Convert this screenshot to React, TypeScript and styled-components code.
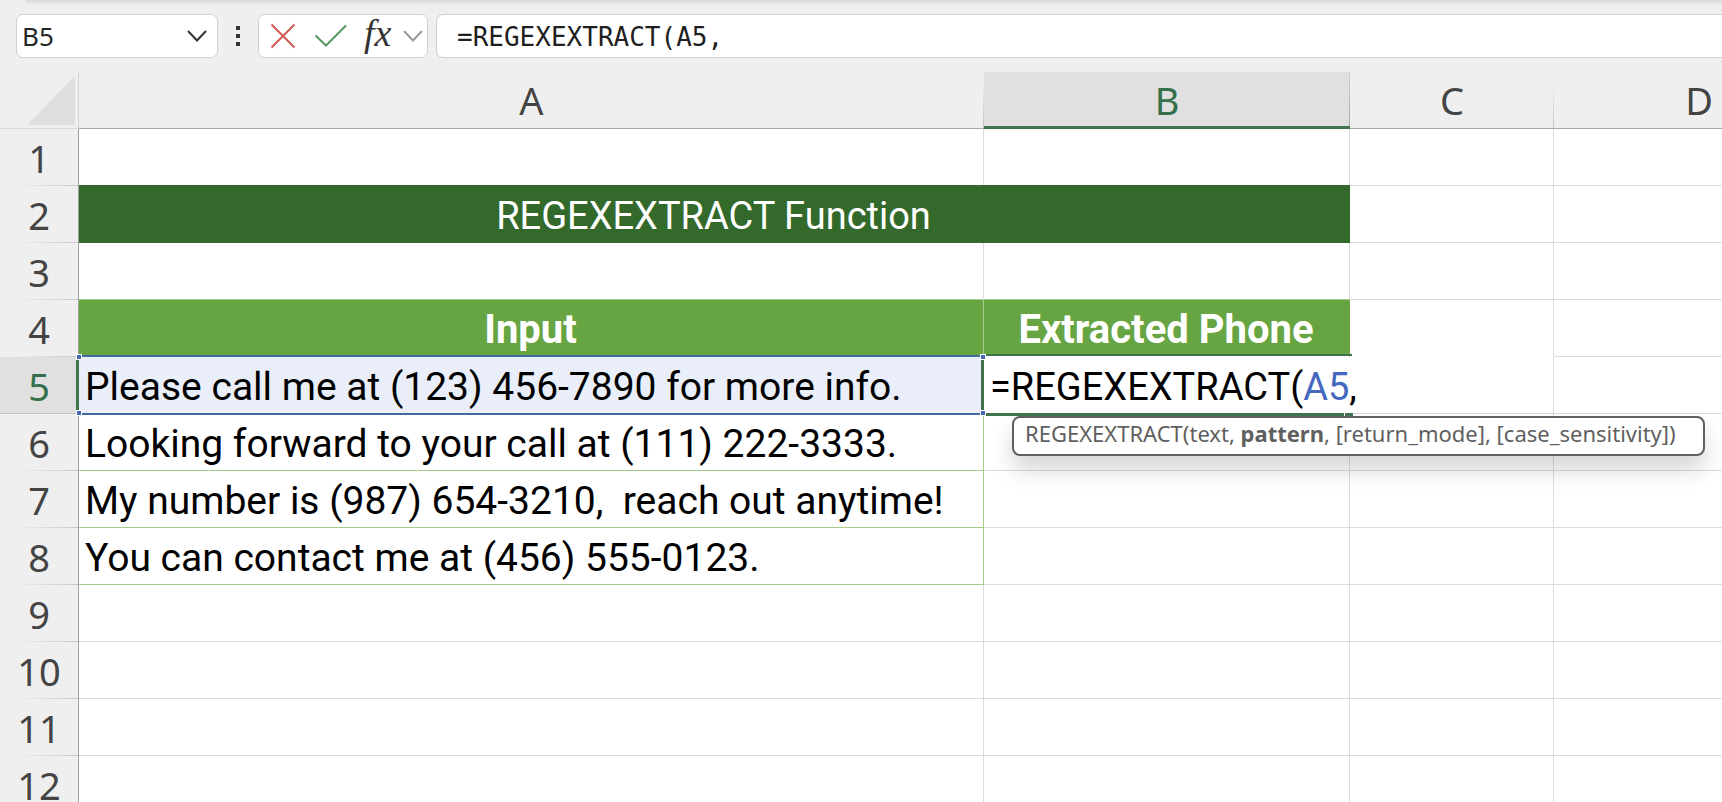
import styled, { createGlobalStyle, css } from "styled-components";

const GlobalStyle = createGlobalStyle`
  * {
    box-sizing: border-box;
  }
  body {
    margin: 0;
    background-color: #ffffff;
    overflow: hidden;
  }
`;

const headFont = `"Noto Sans", "Open Sans", sans-serif`;
const cellFont = `Roboto, "Liberation Sans", sans-serif`;
const monoFont = `"DejaVu Sans Mono", "Liberation Mono", monospace`;

const Page = styled.div`
  display: flex;
  flex-direction: column;
  height: 100vh;
  overflow: hidden;
  font-family: ${cellFont};
`;

const Toolbar = styled.header`
  flex: none;
  display: flex;
  align-items: flex-start;
  height: 72px;
  padding: 14px 0 0 16px;
  background-color: #efefef;
  background-image: linear-gradient(#d9d9d9, #efefef);
  background-size: 100% 5px;
  background-position: 25px 0;
  background-repeat: no-repeat;
`;

const Box = styled.div`
  display: flex;
  align-items: center;
  height: 44px;
  border: 1px solid #d0d0d0;
  border-radius: 7px;
  background-color: #ffffff;
`;

const NameBox = styled(Box)`
  width: 202px;
  padding-right: 10px;
`;

const NameInput = styled.input`
  flex: 1;
  min-width: 0;
  padding: 0 0 0 5px;
  border: 0;
  outline: 0;
  background: transparent;
  color: #262626;
  font-family: ${headFont};
  font-size: 26px;
`;

const IconButton = styled.button`
  display: flex;
  align-items: center;
  justify-content: center;
  padding: 0;
  border: 0;
  background: transparent;
`;

const MoreButton = styled(IconButton)`
  width: 40px;
  height: 44px;
`;

const FormulaTools = styled(Box)`
  width: 170px;
  gap: 16px;
  padding: 0 0 0 11px;
`;

const FunctionTools = styled.div`
  display: flex;
  align-items: center;
  gap: 12px;
`;

const FxLabel = styled.span`
  color: #333333;
  font-family: "Liberation Serif", serif;
  font-size: 38px;
  font-style: italic;
  line-height: 38px;
  padding-bottom: 6px;
`;

const FormulaBar = styled(Box)`
  flex: 1;
  margin-left: 8px;
  border-right: 0;
  border-radius: 7px 0 0 7px;
`;

const FormulaInput = styled.input`
  flex: 1;
  min-width: 0;
  padding: 2px 0 0 20px;
  border: 0;
  outline: 0;
  background: transparent;
  color: #1f1f1f;
  font-family: ${monoFont};
  font-size: 26px;
`;

const Sheet = styled.main`
  flex: 1;
  min-height: 0;
  overflow: hidden;
`;

const Grid = styled.table`
  width: 1844px;
  table-layout: fixed;
  border-collapse: separate;
  border-spacing: 0;
`;

const Col = styled.col<{ $width: number }>`
  width: ${({ $width }) => $width}px;
`;

const headCell = css`
  height: 57px;
  padding: 0;
  background-color: #efefef;
  color: #444444;
  font-family: ${headFont};
  font-size: 38px;
  font-weight: 400;
  text-align: center;
`;

const Corner = styled.td`
  ${headCell}
  border-right: 1px solid #d4d4d4;
  border-bottom: 1px solid #dcdcdc;
`;

const CornerButton = styled(IconButton)`
  width: 100%;
  height: 56px;
  justify-content: flex-end;
  padding-right: 3px;
`;

const ColumnHead = styled.th<{ $active?: boolean }>`
  ${headCell}
  line-height: 56px;
  border-bottom: 1px solid #a6a6a6;
  background-image: linear-gradient(transparent 20%, #c4c4c4);
  background-size: 1px 100%;
  background-position: right;
  background-repeat: no-repeat;
  ${({ $active }) =>
    $active &&
    css`
      padding-top: 2px;
      background-color: #e0e0e0;
      background-image: linear-gradient(#cfcfcf, #a8a8a8);
      border-bottom: 3px solid #40744f;
      color: #35704a;
      line-height: 52px;
    `}
`;

const RowHead = styled.th<{ $active?: boolean }>`
  ${headCell}
  border-right: 1px solid #a0a0a0;
  background-image: linear-gradient(to right, transparent 22%, #c8c8c8);
  background-size: 100% 1px;
  background-position: bottom;
  background-repeat: no-repeat;
  line-height: 56px;
  ${({ $active }) =>
    $active &&
    css`
      padding-left: 2px;
      background-color: #e0e0e0;
      background-image: linear-gradient(#c4c4c4, #c4c4c4);
      border-right: 3px solid #40744f;
      color: #35704a;
    `}
`;

type CellKind = "banner" | "tableHead" | "reference" | "editing";

const Cell = styled.td<{ $kind?: CellKind; $line?: string; $side?: string }>`
  height: 57px;
  padding: 4px 7px 0 6px;
  border-right: 1px solid ${({ $side }) => $side ?? "#dcdcdc"};
  border-bottom: 1px solid ${({ $line }) => $line ?? "#dcdcdc"};
  color: #000000;
  font-size: 39px;
  line-height: 52px;
  white-space: pre;
  ${({ $kind }) =>
    $kind === "banner" &&
    css`
      background-color: #34692c;
      box-shadow: 0 -1px #34692c;
      color: #ffffff;
      font-size: 38px;
      text-align: center;
    `}
  ${({ $kind }) =>
    $kind === "tableHead" &&
    css`
      background-color: #67a442;
      color: #ffffff;
      font-size: 40px;
      font-weight: 700;
      text-align: center;
    `}
  ${({ $kind }) =>
    $kind === "reference" &&
    css`
      position: relative;
      background-color: #e9eef8;
    `}
  ${({ $kind }) =>
    $kind === "editing" &&
    css`
      position: relative;
      font-size: 38px;
    `}
`;

const ReferenceFrame = styled.div`
  position: absolute;
  inset: -2px 0;
  border: solid #44699f;
  border-width: 2px 0;
`;

const Handle = styled.i<{ $x: "left" | "right"; $y: "top" | "bottom" }>`
  position: absolute;
  z-index: 2;
  width: 6px;
  height: 6px;
  ${({ $x }) => $x}: -3px;
  ${({ $y }) => $y}: -3px;
  border: 1px solid #ffffff;
  background-color: #4468b4;
`;

const EditFrame = styled.div`
  position: absolute;
  inset: -3px;
  border: solid #40744f;
  border-width: 2px 0 3px 3px;
`;

const FillHandle = styled.i`
  position: absolute;
  right: -1px;
  bottom: -3px;
  width: 9px;
  height: 3px;
  border-left: 1px solid #ffffff;
  background-color: #40744f;
`;

const Argument = styled.span`
  color: #4468be;
`;

const Hint = styled.div`
  position: absolute;
  z-index: 3;
  top: 59px;
  left: 28px;
  height: 40px;
  padding: 0 27px 0 11px;
  border: 2px solid #5f5f5f;
  border-radius: 8px;
  background-color: #ffffff;
  box-shadow: 0 14px 22px rgba(0, 0, 0, 0.16);
  color: #5f5f5f;
  font-family: ${headFont};
  font-size: 22px;
  line-height: 31px;
`;

const Chevron = ({ color }: { color: string }) => (
  <svg width="20" height="14" viewBox="0 0 20 14" fill="none">
    <path d="M1 2L10 11.500L19 2" stroke={color} strokeWidth="2" />
  </svg>
);

const columns = [
  { name: "A", width: 905 },
  { name: "B", width: 366 },
  { name: "C", width: 204 },
  { name: "D", width: 290 },
];

const tableGreen = "#a4cd8c";

const messages: Record<number, string> = {
  6: "Looking forward to your call at (111) 222-3333.",
  7: "My number is (987) 654-3210,  reach out anytime!",
  8: "You can contact me at (456) 555-0123.",
};

const RowCells = ({ row }: { row: number }) => {
  if (row === 2) {
    return (
      <>
        <Cell $kind="banner" $line="#34692c" $side="#34692c" colSpan={2}>
          REGEXEXTRACT Function
        </Cell>
        <Cell />
        <Cell />
      </>
    );
  }
  if (row === 3) {
    return (
      <>
        <Cell $line={tableGreen} />
        <Cell $line={tableGreen} />
        <Cell />
        <Cell />
      </>
    );
  }
  if (row === 4) {
    return (
      <>
        <Cell $kind="tableHead" $line="#67a442" $side={tableGreen}>
          Input
        </Cell>
        <Cell $kind="tableHead" $line="#ffffff" $side="#67a442">
          Extracted Phone
        </Cell>
        <Cell $line="#ffffff" />
        <Cell />
      </>
    );
  }
  if (row === 5) {
    return (
      <>
        <Cell $kind="reference">
          Please call me at (123) 456-7890 for more info.
          <ReferenceFrame />
          <Handle $x="left" $y="top" />
          <Handle $x="left" $y="bottom" />
          <Handle $x="right" $y="top" />
          <Handle $x="right" $y="bottom" />
        </Cell>
        <Cell $kind="editing" $side="#ffffff">
          <EditFrame>
            <FillHandle />
          </EditFrame>
          =REGEXEXTRACT(<Argument>A5</Argument>,
          <Hint role="tooltip">
            REGEXEXTRACT(text, <b>pattern</b>, [return_mode], [case_sensitivity])
          </Hint>
        </Cell>
        <Cell />
        <Cell />
      </>
    );
  }
  const message = messages[row];
  const green = message ? tableGreen : undefined;
  return (
    <>
      <Cell $line={green} $side={green}>
        {message}
      </Cell>
      <Cell />
      <Cell />
      <Cell />
    </>
  );
};

export default function App() {
  return (
    <Page>
      <GlobalStyle />
      <Toolbar>
        <NameBox>
          <NameInput aria-label="Name box" defaultValue="B5" />
          <IconButton aria-label="Show names">
            <Chevron color="#333333" />
          </IconButton>
        </NameBox>
        <MoreButton aria-label="More">
          <svg width="4" height="20" viewBox="0 0 4 20" fill="#333333">
            <path d="M0 0h4v4H0zM0 8h4v4H0zM0 16h4v4H0z" />
          </svg>
        </MoreButton>
        <FormulaTools>
          <IconButton aria-label="Cancel">
            <svg width="26" height="26" viewBox="0 0 26 26" fill="none">
              <path d="M1.500 1.500L24.500 24.500M24.500 1.500L1.500 24.500" stroke="#cf5a55" strokeWidth="2" />
            </svg>
          </IconButton>
          <IconButton aria-label="Enter">
            <svg width="36" height="24" viewBox="0 0 36 24" fill="none">
              <path d="M3.500 11.500L14 21.500L34 1.500" stroke="#55985f" strokeWidth="2" />
            </svg>
          </IconButton>
          <FunctionTools>
            <IconButton aria-label="Insert function">
              <FxLabel>fx</FxLabel>
            </IconButton>
            <IconButton aria-label="Function list">
              <Chevron color="#9a9a9a" />
            </IconButton>
          </FunctionTools>
        </FormulaTools>
        <FormulaBar>
          <FormulaInput aria-label="Formula bar" defaultValue="=REGEXEXTRACT(A5," />
        </FormulaBar>
      </Toolbar>
      <Sheet>
        <Grid>
          <colgroup>
            <Col $width={79} />
            {columns.map(({ name, width }) => (
              <Col key={name} $width={width} />
            ))}
          </colgroup>
          <thead>
            <tr>
              <Corner>
                <CornerButton aria-label="Select all">
                  <svg width="48" height="50" viewBox="0 0 48 50" fill="#dfdfdf">
                    <path d="M48 1V50H0z" />
                  </svg>
                </CornerButton>
              </Corner>
              {columns.map(({ name }) => (
                <ColumnHead key={name} scope="col" $active={name === "B"}>
                  {name}
                </ColumnHead>
              ))}
            </tr>
          </thead>
          <tbody>
            {Array.from({ length: 12 }, (_, i) => i + 1).map((row) => (
              <tr key={row}>
                <RowHead scope="row" $active={row === 5}>
                  {row}
                </RowHead>
                <RowCells row={row} />
              </tr>
            ))}
          </tbody>
        </Grid>
      </Sheet>
    </Page>
  );
}
